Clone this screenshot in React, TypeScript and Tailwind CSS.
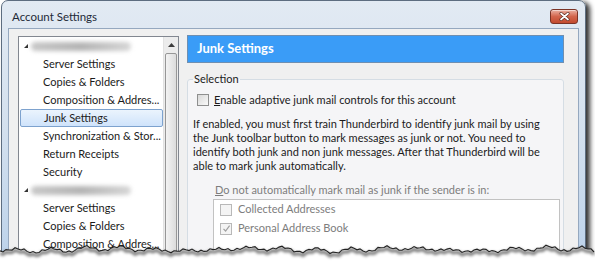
import React from "react";

const treeRows = [
  { kind: "account" },
  { kind: "item", label: "Server Settings" },
  { kind: "item", label: "Copies & Folders" },
  { kind: "item", label: "Composition & Addres..." },
  { kind: "item", label: "Junk Settings", selected: true },
  { kind: "item", label: "Synchronization & Stor..." },
  { kind: "item", label: "Return Receipts" },
  { kind: "item", label: "Security" },
  { kind: "account" },
  { kind: "item", label: "Server Settings" },
  { kind: "item", label: "Copies & Folders" },
  { kind: "item", label: "Composition & Addres..." },
];

// jagged "torn paper" edge along the bottom
const edgePoints = () => {
  const pts: string[] = [];
  for (let x = 0; x <= 596; x += 3) {
    const y =
      249.5 +
      Math.sin(x * 0.71) * 1.1 +
      Math.sin(x * 0.19 + 1) * 1.6 +
      Math.sin(x * 1.93) * 0.7 +
      Math.sin(x * 0.043) * 1.2;
    pts.push(`${x} ${y.toFixed(1)}`);
  }
  return pts;
};

const Checkbox = ({ checked = false, disabled = false }: { checked?: boolean; disabled?: boolean }) => (
  <div
    className={`w-[12px] h-[12px] shrink-0 border flex items-center justify-center ${
      disabled ? "border-[#b8b8b8] bg-[#f4f4f4]" : "border-[#8e8f8f] bg-gradient-to-br from-[#d8d8d8] to-[#fafafa]"
    }`}
  >
    {checked && (
      <svg width="9" height="9" viewBox="0 0 9 9">
        <path d="M1.5 4.8 L3.6 7 L7.6 1.6" fill="none" stroke="#a0a0a0" strokeWidth="1.2" />
      </svg>
    )}
  </div>
);

export default function App() {
  const pts = edgePoints();
  const line = "M" + pts.join(" L");
  const fill = line + " L596 264 L0 264 Z";

  return (
    <div className="relative w-[595px] h-[264px] overflow-hidden bg-white font-['Lato',sans-serif] text-[11px] text-[#1b1b1b]">
      {/* window */}
      <div className="ml-[1px] w-[585px] h-[262px] flex flex-col rounded-t-[7px] border border-[#5d6d80] bg-gradient-to-b from-[#e2eaf3] via-[#d3e0ee] to-[#bcd2ea] px-[6px] shadow-[4px_2px_5px_rgba(0,0,0,0.8)]">
        {/* title bar */}
        <div className="h-[27px] shrink-0 flex items-center justify-between pt-[4px] pl-[4px] pr-[1px]">
          <span className="text-[11.5px] text-[#1e2a38]">Account Settings</span>
          <div className="w-[28px] h-[15px] rounded-[3px] border border-[#7a3326] bg-gradient-to-b from-[#eab0a2] via-[#d2654c] to-[#c24a2e] flex items-center justify-center shadow-[inset_0_1px_0_rgba(255,255,255,0.5)]">
            <svg width="11" height="9" viewBox="0 0 11 9">
              <path d="M2 1.5 L9 7.5 M9 1.5 L2 7.5" stroke="#5a2a20" strokeWidth="3" strokeLinecap="round" />
              <path d="M2 1.5 L9 7.5 M9 1.5 L2 7.5" stroke="#ffffff" strokeWidth="1.7" strokeLinecap="round" />
            </svg>
          </div>
        </div>

        {/* client area */}
        <div className="flex-1 flex gap-[8px] border border-[#95a8bf] bg-[#f0f0f0] pl-[9px] pr-[13px] pt-[6px]">
          {/* account tree */}
          <div className="mt-[1px] w-[161px] shrink-0 flex border border-[#828790] bg-white">
            <div className="flex-1 flex flex-col">
              {treeRows.map((r, i) =>
                r.kind === "account" ? (
                  <div key={i} className="h-[18px] shrink-0 flex items-center pl-[4px] gap-[2px]">
                    <svg width="6" height="6" viewBox="0 0 6 6">
                      <path d="M5 1 L5 5 L1 5 Z" fill="#333" />
                    </svg>
                    <div className="w-[100px] h-[9px] rounded-full bg-gradient-to-r from-[#c8c8c8] via-[#b4b4b4] to-[#d6d6d6] blur-[2px]" />
                  </div>
                ) : (
                  <div
                    key={i}
                    className={`h-[18px] shrink-0 flex items-center pl-[23px] ml-[1px] whitespace-nowrap ${
                      r.selected
                        ? "rounded-[2px] border border-[#7da2ce] bg-gradient-to-b from-[#ebf4fd] to-[#cfe3fb] pl-[22px]"
                        : ""
                    }`}
                  >
                    {r.label}
                  </div>
                )
              )}
            </div>
            {/* scrollbar */}
            <div className="w-[15px] shrink-0 flex flex-col bg-[#ececec] border-l border-[#e2e2e2]">
              <div className="h-[15px] flex items-center justify-center">
                <svg width="7" height="4" viewBox="0 0 7 4">
                  <path d="M0 4 L3.5 0 L7 4 Z" fill="#3c3c3c" />
                </svg>
              </div>
              <div className="flex-1 mx-[1px] mt-[1px] rounded-[2px] border border-[#979797] bg-gradient-to-r from-[#f3f3f3] to-[#dcdcdc] flex flex-col items-center justify-end pb-[16px] gap-[1px]">
                <div className="w-[5px] h-px bg-[#777]" />
                <div className="w-[5px] h-px bg-[#777]" />
                <div className="w-[5px] h-px bg-[#777]" />
                <div className="w-[5px] h-px bg-[#777]" />
              </div>
            </div>
          </div>

          {/* junk settings pane */}
          <div className="w-[377px] shrink-0 flex flex-col">
            <div className="h-[28px] shrink-0 flex items-center pl-[9px] border border-[#6f8fb1] bg-[#3a9cf7] text-white font-bold text-[13px]">
              Junk Settings
            </div>

            <fieldset className="mt-[9px] flex-1 border border-[#d5dde4] rounded-[3px] bg-[#f5f5f7] pl-[5px]">
              <legend className="px-[1px] leading-[14px]">Selection</legend>

              <div className="mt-[7px] ml-[4px] flex items-center gap-[5px] h-[14px]">
                <Checkbox />
                <span>
                  <span className="underline">E</span>nable adaptive junk mail controls for this account
                </span>
              </div>

              <p className="mt-[10px] leading-[14px] whitespace-nowrap">
                If enabled, you must first train Thunderbird to identify junk mail by using
                <br />
                the Junk toolbar button to mark messages as junk or not. You need to
                <br />
                identify both junk and non junk messages. After that Thunderbird will be
                <br />
                able to mark junk automatically.
              </p>

              <div className="mt-[10px] ml-[22px] leading-[14px] text-[#7d7d7d]">
                <span className="underline">D</span>o not automatically mark mail as junk if the sender is in:
              </div>

              <div className="mt-[2px] ml-[20px] w-[347px] h-[80px] border border-[#c2c2c2] bg-white text-[#7d7d7d]">
                <div className="h-[19px] flex items-center gap-[6px] pl-[6px]">
                  <Checkbox disabled />
                  <span>Collected Addresses</span>
                </div>
                <div className="h-[19px] flex items-center gap-[6px] pl-[6px]">
                  <Checkbox disabled checked />
                  <span>Personal Address Book</span>
                </div>
              </div>
            </fieldset>
          </div>
        </div>
      </div>

      {/* torn bottom edge */}
      <svg className="absolute left-0 top-0" width="595" height="264" viewBox="0 0 595 264">
        <defs>
          <filter id="tornBlur" x="-5%" y="-50%" width="110%" height="200%">
            <feGaussianBlur stdDeviation="1.6" />
          </filter>
        </defs>
        <path d={fill} fill="#ffffff" />
        <path d={line} transform="translate(0 2.5)" fill="none" stroke="#000" strokeOpacity="0.55" strokeWidth="3" filter="url(#tornBlur)" />
        <path d={line} fill="none" stroke="#222" strokeWidth="1.1" />
      </svg>
    </div>
  );
}
